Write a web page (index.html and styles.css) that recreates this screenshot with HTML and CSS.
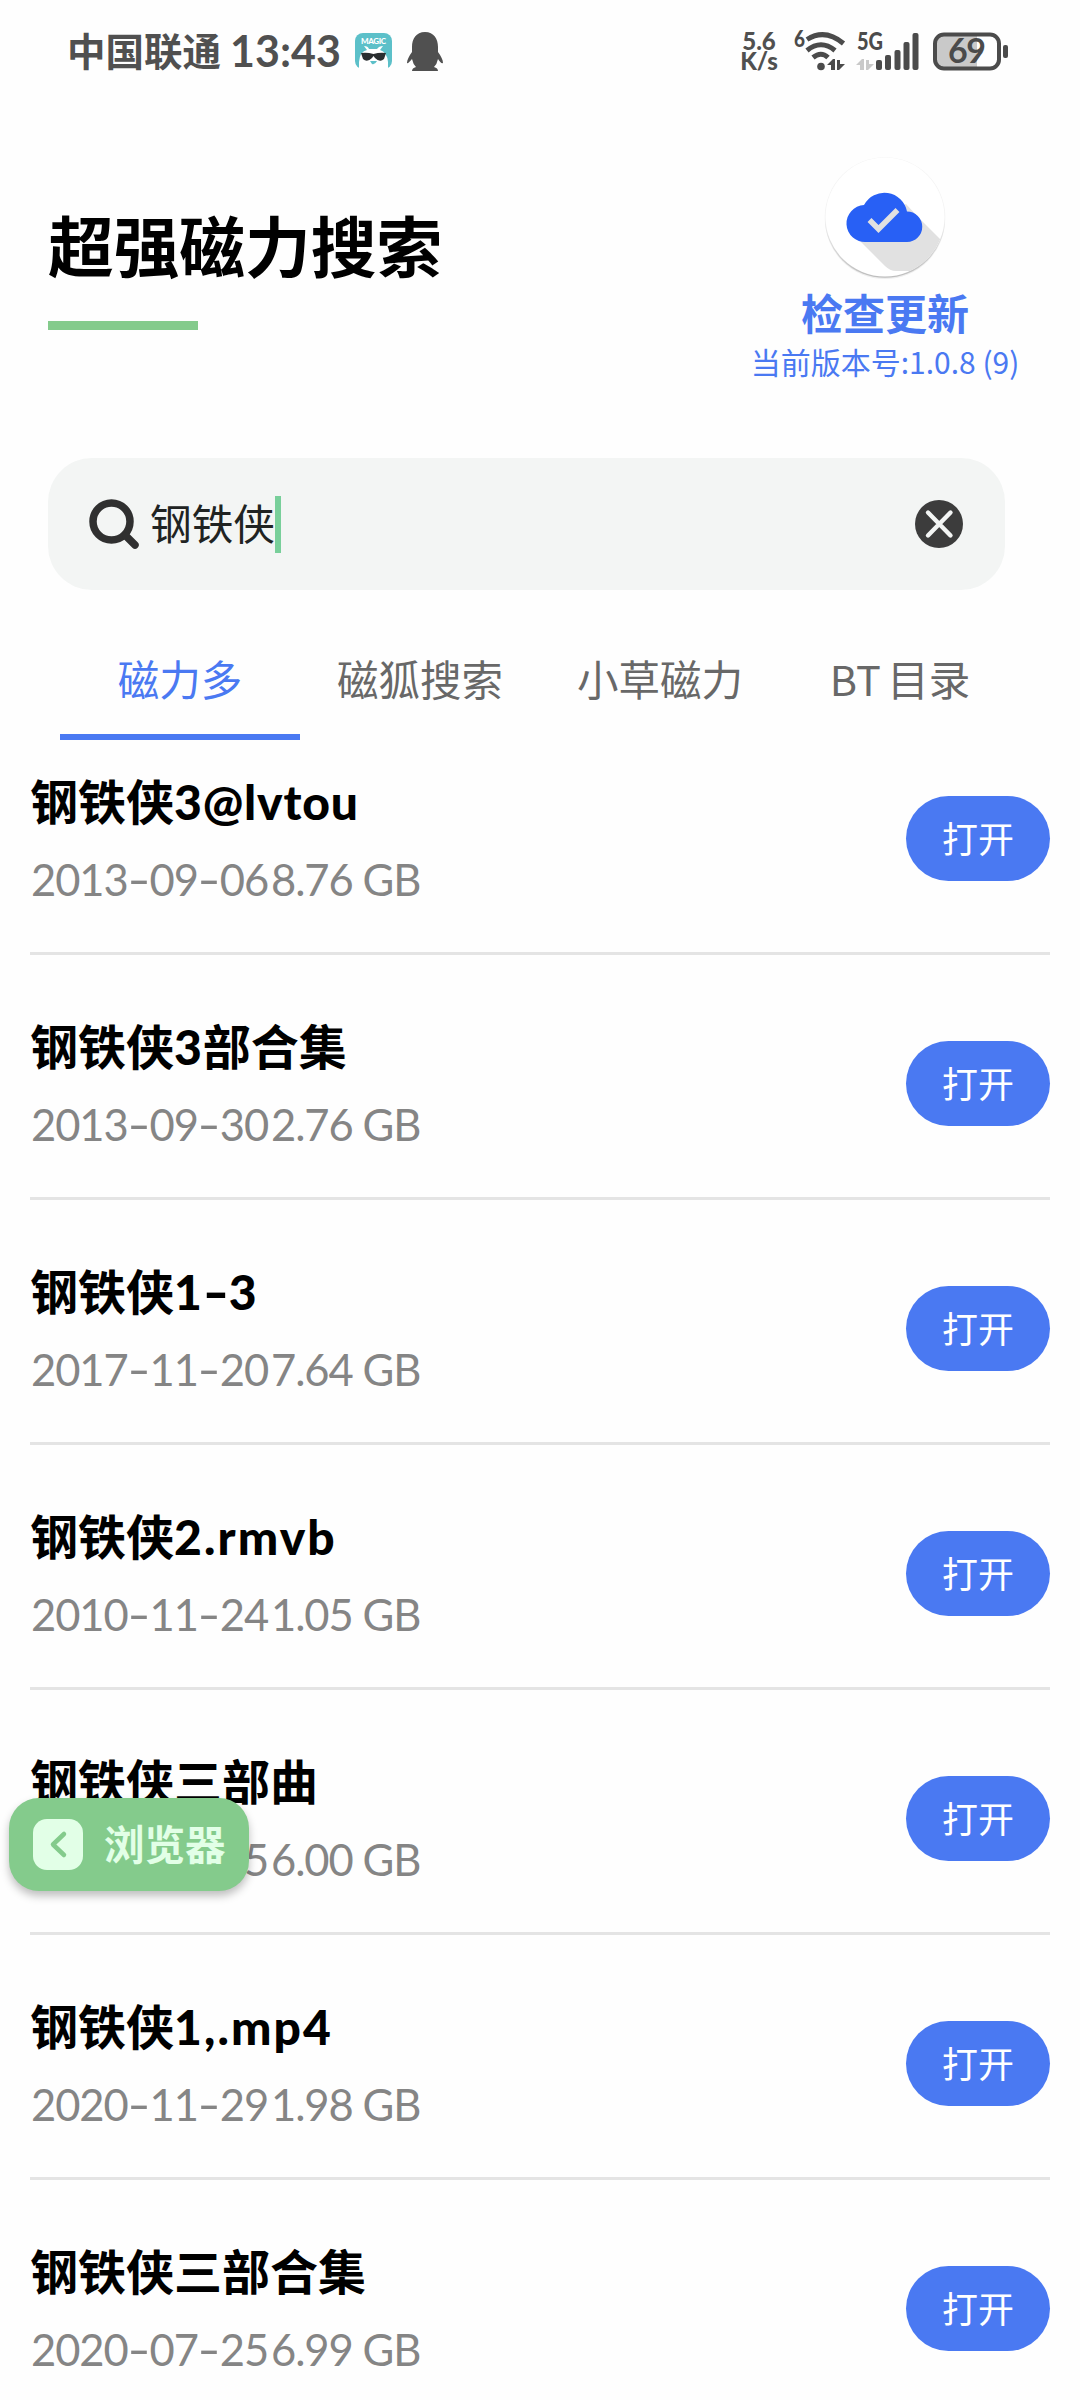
FILE: index.html
```html
<!DOCTYPE html>
<html lang="zh-CN">
<head>
<meta charset="utf-8">
<title>超强磁力搜索</title>
<link rel="stylesheet" href="styles.css">
</head>
<body>
<div class="status">
  <div class="status-left">
    <span class="carrier">中国联通</span>
    <span class="clock">13:43</span>
    <svg class="app-icon" width="37" height="36" viewBox="0 0 37 36">
      <rect width="37" height="36" rx="8" fill="#5cc0c9"/>
      <path d="M4 36V29Q5 18 12 17L9 13Q13 13 14 16H22Q24 13 28 13L25 17Q32 19 33 29V36Z" fill="#fff"/>
      <path d="M6 20Q12 19 18.500 21Q25 19 31 20L29 26Q25 30 20 25L18.500 23L17 25Q12 30 8 26Z" fill="#2a2e30"/>
      <path d="M15 28H22Q20 32 17 31Z" fill="#5cc0c9"/>
      <text class="magic" x="6" y="11" textLength="25">MAGIC</text>
    </svg>
    <svg class="qq" width="36" height="39" viewBox="0 0 36 39">
      <path fill="#505050" d="M18 0C9 0 5 7 5 15L5 20C2 24 0 28 0 31Q1 32 5 27Q6 32 9 35Q5 36 5 39H31Q31 36 27 35Q30 32 31 27Q34 32 36 31C36 28 34 24 31 20V15C31 7 27 0 18 0Z"/>
    </svg>
  </div>
  <div class="status-right">
    <div class="speed"><span>5.6</span><span>K/s</span></div>
    <svg width="53" height="40" viewBox="0 0 53 40">
      <text class="wifi-gen" x="0" y="16" textLength="11" lengthAdjust="spacingAndGlyphs">6</text>
      <g fill="none" stroke="#4b4b4b" stroke-width="5">
        <path d="M13 8.500Q31-3 49.500 12.500"/>
        <path d="M13 19.500Q27 8 41 19.500" />
        <path d="M19 26.500Q27 20 34 26.500"/>
      </g>
      <circle cx="27" cy="35.500" r="3.800" fill="#4b4b4b"/>
      <path fill="#4b4b4b" d="M33 34L39 28H41V39H37V34ZM43 29H46V33H51L45 39H43Z"/>
    </svg>
    <svg width="64" height="40" viewBox="0 0 64 40">
      <text class="net-gen" x="2" y="19" textLength="26" lengthAdjust="spacingAndGlyphs">5G</text>
      <path fill="#c9c9c9" d="M1 34L7 28H9V39H5V34ZM11 29H14V33H19L13 39H11Z"/>
      <g fill="#4b4b4b">
        <rect x="21" y="29" width="6" height="10" rx="2"/>
        <rect x="30" y="24" width="6" height="15" rx="2"/>
        <rect x="39.500" y="19" width="6" height="20" rx="2"/>
        <rect x="48.500" y="11" width="6" height="28" rx="2"/>
        <rect x="57.500" y="2" width="6" height="37" rx="2"/>
      </g>
    </svg>
    <svg class="battery" width="76" height="40" viewBox="0 0 76 40">
      <path d="M10 4H44V37H10Q3 36 3 30V11Q3 4 10 4Z" fill="#c9c9c9"/>
      <rect x="2" y="3.500" width="64" height="34" rx="9" fill="none" stroke="#4b4b4b" stroke-width="4"/>
      <rect x="70" y="14" width="5" height="13" rx="2" fill="#4b4b4b"/>
      <text class="battery-text" x="15" y="32" textLength="38">69</text>
    </svg>
  </div>
</div>

<header class="header">
  <div class="brand">
    <h1>超强磁力搜索</h1>
    <div class="brand-bar"></div>
  </div>
  <div class="update">
    <svg width="130" height="130" viewBox="0 0 130 130">
      <defs>
        <clipPath id="disc"><circle cx="65" cy="65" r="59.500"/></clipPath>
        <linearGradient id="edge" x1="0" y1="0" x2="0" y2="1">
          <stop offset=".5" stop-color="#f2f2f2"/><stop offset="1" stop-color="#bdbdbd"/>
        </linearGradient>
      </defs>
      <circle cx="65" cy="67" r="60" fill="#eee"/>
      <circle cx="65" cy="65.500" r="60.300" fill="url(#edge)"/>
      <circle cx="65" cy="65" r="59.500" fill="#fff"/>
      <path clip-path="url(#disc)" fill="#e1e1e1" d="M37 86L65 114Q70 119 76 119H130V97L98 65L86 52Z"/>
      <path fill="#2860f5" d="M46 90A18.500 18.500 0 0 1 44 53A23 23 0 0 1 87 59.500A15.200 15.200 0 0 1 87 90Z"/>
      <path fill="none" stroke="#e1e1e1" stroke-width="5.500" d="M49.500 68L58.500 77L77.500 58"/>
    </svg>
    <div class="update-label">检查更新</div>
    <div class="version">当前版本号:1.0.8 (9)</div>
  </div>
</header>

<div class="search">
  <svg width="51" height="51" viewBox="0 0 51 51" fill="none" stroke="#303030">
    <circle cx="22.500" cy="22.500" r="18.500" stroke-width="7.500"/>
    <path d="M37 37L46 46" stroke-width="7.500" stroke-linecap="round"/>
  </svg>
  <span class="query">钢铁侠</span>
  <span class="caret"></span>
  <svg class="clear" width="48" height="48" viewBox="0 0 48 48">
    <circle cx="24" cy="24" r="24" fill="#3c3c3c"/>
    <path d="M13 12.500L35.500 35.500M35.500 12.500L13 35.500" stroke="#f3f5f4" stroke-width="4.400" stroke-linecap="round"/>
  </svg>
</div>

<nav class="tabs">
  <div class="tab active">磁力多</div>
  <div class="tab">磁狐搜索</div>
  <div class="tab">小草磁力</div>
  <div class="tab bt">BT 目录</div>
</nav>

<ul class="results">
  <li><div class="info"><div class="name">钢铁侠<b>3@lvtou</b></div><div class="meta"><span class="date">2013<i>-</i>09<i>-</i>06</span><span class="size">8.76 GB</span></div></div><button class="open">打开</button></li>
  <li><div class="info"><div class="name">钢铁侠<b>3</b>部合集</div><div class="meta"><span class="date">2013<i>-</i>09<i>-</i>30</span><span class="size">2.76 GB</span></div></div><button class="open">打开</button></li>
  <li><div class="info"><div class="name">钢铁侠<b>1<i>-</i>3</b></div><div class="meta"><span class="date">2017<i>-</i>11<i>-</i>20</span><span class="size">7.64 GB</span></div></div><button class="open">打开</button></li>
  <li><div class="info"><div class="name">钢铁侠<b class="wide">2.rmvb</b></div><div class="meta"><span class="date">2010<i>-</i>11<i>-</i>24</span><span class="size">1.05 GB</span></div></div><button class="open">打开</button></li>
  <li><div class="info"><div class="name">钢铁侠三部曲</div><div class="meta"><span class="date">2017<i>-</i>11<i>-</i>25</span><span class="size">6.00 GB</span></div></div><button class="open">打开</button></li>
  <li><div class="info"><div class="name">钢铁侠<b class="wide">1,.mp4</b></div><div class="meta"><span class="date">2020<i>-</i>11<i>-</i>29</span><span class="size">1.98 GB</span></div></div><button class="open">打开</button></li>
  <li><div class="info"><div class="name">钢铁侠三部合集</div><div class="meta"><span class="date">2020<i>-</i>07<i>-</i>25</span><span class="size">6.99 GB</span></div></div><button class="open">打开</button></li>
</ul>

<div class="back-chip">
  <svg width="50" height="51" viewBox="0 0 50 51">
    <rect width="50" height="51" rx="14" fill="#e2ffe7"/>
    <path d="M31 15L20 25.500L31 36" fill="none" stroke="#84cb8c" stroke-width="4.500" stroke-linecap="round" stroke-linejoin="round"/>
  </svg>
  <span>浏览器</span>
</div>
</body>
</html>
```
FILE: styles.css
```css
* { box-sizing: border-box; margin: 0; padding: 0; }
body {
  position: relative;
  width: 1080px;
  height: 2400px;
  overflow: hidden;
  background: #fefefe;
  color: #000;
  font-family: "Noto Sans CJK SC", sans-serif;
}
svg { display: block; flex: none; overflow: visible; }

.status {
  display: flex;
  justify-content: space-between;
  height: 102px;
  padding: 0 71px 0 67px;
  color: #505050;
}
.status-left, .status-right { display: flex; align-items: center; height: 102px; }
.carrier { font-size: 38.5px; font-weight: 700; line-height: 98px; height: 102px; white-space: nowrap; }
.clock { width: 111px; margin-left: 9px; font: 700 43px/102px Lato, sans-serif; letter-spacing: 0; white-space: nowrap; }
.app-icon { margin-left: 14px; }
.magic { font: 900 8px Lato, sans-serif; fill: #fff; }
.qq { margin-left: 15px; }
.speed { display: flex; flex-direction: column; width: 40px; margin-right: 15px; font: 900 24px/20px Lato, sans-serif; text-align: center; }
.status-right svg + svg { margin-left: 8px; }
.status-right .battery { margin-left: 14px; }
.wifi-gen { font: 900 22px Lato, sans-serif; fill: #4b4b4b; }
.net-gen { font: 900 25px Lato, sans-serif; fill: #4b4b4b; }
.battery-text { font: 700 34px Lato, sans-serif; fill: #4b4b4b; }

.header {
  display: flex;
  justify-content: space-between;
  height: 356px;
  padding: 0 60px 0 48px;
}
.brand { padding-top: 98px; }
.brand h1 { font-size: 65.7px; font-weight: 700; line-height: 88px; }
.brand-bar { width: 150px; height: 9px; margin-top: 33px; background: #84cb8c; }
.update { display: flex; flex-direction: column; align-items: center; width: 270px; padding-top: 50px; color: #4a79f2; }
.update-label { font-size: 42px; font-weight: 700; line-height: 60px; }
.version { font-size: 30px; line-height: 38px; white-space: nowrap; }

.search {
  display: flex;
  align-items: center;
  width: 957px;
  height: 132px;
  margin-left: 48px;
  padding: 0 42px 0 41px;
  border-radius: 44px;
  background: #f3f5f4;
}
.query { margin: -4px 0 0 10px; font-size: 41.7px; line-height: 60px; color: #202322; }
.caret { width: 6px; height: 57px; background: #78cf9a; }
.clear { margin-left: auto; }

.tabs { display: grid; grid-template-columns: repeat(4, 240px); height: 150px; padding: 30px 60px 0; }
.tab { border-bottom: 6px solid transparent; font-size: 41.5px; line-height: 116px; height: 120px; text-align: center; color: #686868; }
.tab.active { border-color: #4a79f2; color: #4a79f2; }
.tab.bt { word-spacing: -3px; }

.results { list-style: none; margin: 0 30px; }
.results li { display: flex; justify-content: space-between; height: 245px; padding-top: 56px; border-bottom: 3px solid #e4e4e4; }
.results li:first-child { height: 215px; padding-top: 26px; }
.name { height: 66px; font-size: 48px; font-weight: 700; line-height: 66px; white-space: nowrap; }
.name b { font-family: Lato, sans-serif; font-weight: 900; line-height: 60px; letter-spacing: .8px; }
.name b.wide { letter-spacing: 2.1px; }
.name i, .date i {
  display: inline-block;
  width: 22px;
  font-style: normal;
  letter-spacing: 0;
  text-align: center;
  transform: scaleX(1.45);
}
.name i { width: 26px; }
.meta { display: flex; margin-top: 20px; font: 400 43.5px/54px Lato, sans-serif; letter-spacing: -1.1px; color: #858585; white-space: nowrap; }
.date { width: 241px; padding-left: 1px; }
.open {
  width: 144px;
  height: 85px;
  margin-top: 30px;
  border: 0;
  border-radius: 43px;
  background: #4a79f2;
  color: #fff;
  font: 400 36px/60px "Noto Sans CJK SC", sans-serif;
  padding-bottom: 4px;
}

.back-chip {
  position: absolute;
  left: 9px;
  top: 1798px;
  display: flex;
  align-items: center;
  width: 240px;
  height: 93px;
  padding-left: 24px;
  border-radius: 30px;
  background: #84cb8c;
  box-shadow: 0 5px 9px rgba(0, 0, 0, .25);
  color: #e2ffe7;
  font-size: 40.5px;
  font-weight: 700;
  line-height: 80px;
}
.back-chip span { margin-left: 21px; margin-top: -4px; }
```
